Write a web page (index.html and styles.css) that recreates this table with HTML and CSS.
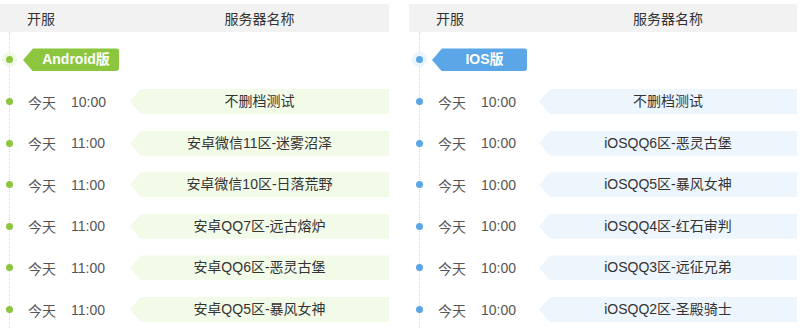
FILE: index.html
```html
<!DOCTYPE html>
<html lang="zh-CN">
<head>
<meta charset="utf-8">
<link rel="stylesheet" href="styles.css">
</head>
<body>
<div class="wrap">
  <section class="panel android">
    <div class="head"><span class="h-open">开服</span><span class="h-name">服务器名称</span></div>
    <div class="list">
      <div class="row badge-row"><span class="dot halo"></span><span class="badge">Android版</span></div>
      <div class="row"><span class="dot"></span><span class="day">今天</span><span class="time">10:00</span><span class="band">不删档测试</span></div>
      <div class="row"><span class="dot"></span><span class="day">今天</span><span class="time">11:00</span><span class="band">安卓微信11区-迷雾沼泽</span></div>
      <div class="row"><span class="dot"></span><span class="day">今天</span><span class="time">11:00</span><span class="band">安卓微信10区-日落荒野</span></div>
      <div class="row"><span class="dot"></span><span class="day">今天</span><span class="time">11:00</span><span class="band">安卓QQ7区-远古熔炉</span></div>
      <div class="row"><span class="dot"></span><span class="day">今天</span><span class="time">11:00</span><span class="band">安卓QQ6区-恶灵古堡</span></div>
      <div class="row"><span class="dot"></span><span class="day">今天</span><span class="time">11:00</span><span class="band">安卓QQ5区-暴风女神</span></div>
    </div>
  </section>
  <section class="panel ios">
    <div class="head"><span class="h-open">开服</span><span class="h-name">服务器名称</span></div>
    <div class="list">
      <div class="row badge-row"><span class="dot halo"></span><span class="badge">IOS版</span></div>
      <div class="row"><span class="dot"></span><span class="day">今天</span><span class="time">10:00</span><span class="band">不删档测试</span></div>
      <div class="row"><span class="dot"></span><span class="day">今天</span><span class="time">10:00</span><span class="band">iOSQQ6区-恶灵古堡</span></div>
      <div class="row"><span class="dot"></span><span class="day">今天</span><span class="time">10:00</span><span class="band">iOSQQ5区-暴风女神</span></div>
      <div class="row"><span class="dot"></span><span class="day">今天</span><span class="time">10:00</span><span class="band">iOSQQ4区-红石审判</span></div>
      <div class="row"><span class="dot"></span><span class="day">今天</span><span class="time">10:00</span><span class="band">iOSQQ3区-远征兄弟</span></div>
      <div class="row"><span class="dot"></span><span class="day">今天</span><span class="time">10:00</span><span class="band">iOSQQ2区-圣殿骑士</span></div>
    </div>
  </section>
</div>
</body>
</html>
```

FILE: styles.css
```css
* { box-sizing: border-box; }
html, body { margin: 0; padding: 0; background: #fff; }
body {
  font-family: "Liberation Sans", "Noto Sans CJK SC", sans-serif;
  font-size: 14px;
  color: #333;
}
.wrap {
  display: flex;
  gap: 20px;
  padding-top: 4px;
}
.panel { width: 389px; flex: none; }
.ios { width: 388px; }
.head {
  height: 28px;
  background: #f2f2f2;
  display: flex;
  align-items: center;
  color: #333;
}
.h-open { width: 130px; padding-left: 27px; }
.h-name { flex: 1; text-align: center; }
.list {
  position: relative;
  padding-top: 7.2px;
}
.list::before {
  content: "";
  position: absolute;
  left: 9px;
  top: 0;
  bottom: 0;
  border-left: 1px dotted #d6d6d6;
}
.ios .list::before { left: 10px; }
.row {
  position: relative;
  height: 41.6px;
  display: flex;
  align-items: center;
}
.dot {
  width: 7px;
  height: 7px;
  border-radius: 50%;
  margin-left: 6px;
  flex: none;
}
.ios .dot { margin-left: 7px; }
.android .dot { background: #8cc63f; }
.ios .dot { background: #5aa6e6; }
.android .halo { box-shadow: 0 0 0 4px #eef8e4; }
.ios .halo { box-shadow: 0 0 0 4px #eaf4fc; }
.day { margin-left: 15px; color: #555; }
.time { margin-left: 15px; color: #555; }
.band {
  margin-left: auto;
  width: 259px;
  height: 25px;
  line-height: 25px;
  text-align: center;
  color: #333;
  clip-path: polygon(0 50%, 11px 0, 100% 0, 100% 100%, 11px 100%);
}
.ios .band { width: 258px; }
.android .band { background: #f2fae8; }
.ios .band { background: #eef6fd; }
.badge {
  height: 23px;
  line-height: 23px;
  color: #fff;
  font-weight: bold;
  font-size: 14px;
  text-align: center;
  border-radius: 0 3px 3px 0;
  clip-path: polygon(0 50%, 10px 0, 100% 0, 100% 100%, 10px 100%);
}
.android .badge {
  margin-left: 10px;
  width: 96px;
  padding-left: 10px;
  background: #8cc63f;
}
.ios .badge {
  margin-left: 9px;
  width: 95px;
  padding-left: 10px;
  background: #5aa6e6;
}
```
